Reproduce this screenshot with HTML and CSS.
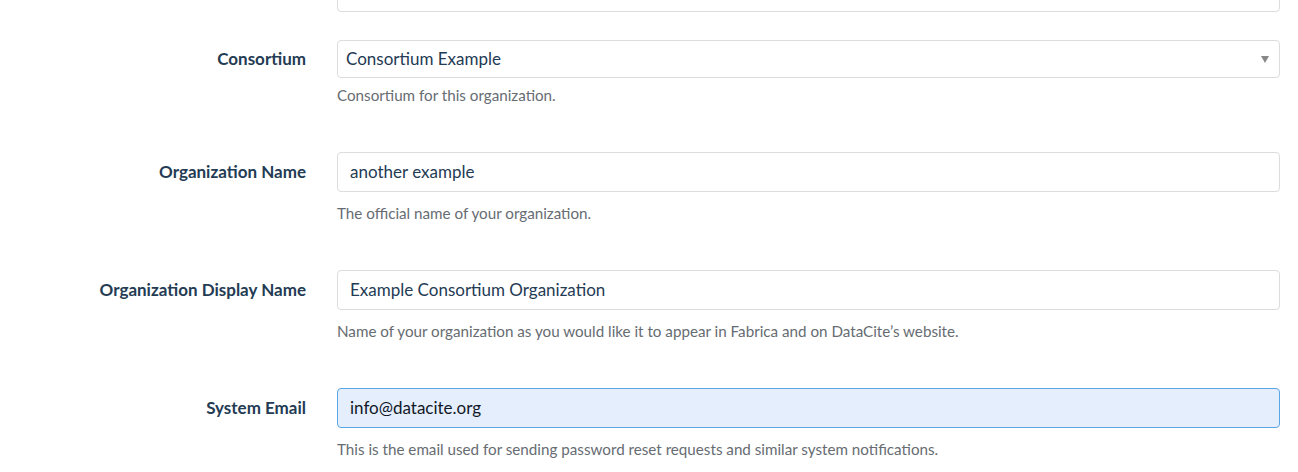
FILE: index.html
```html
<!DOCTYPE html>
<html lang="en">
<head>
<meta charset="utf-8">
<title>Organization settings</title>
<link rel="stylesheet" href="styles.css">
</head>
<body>
<form class="form">
  <div class="group group-first">
    <label class="label">Tax Status</label>
    <div class="field">
      <div class="input">&nbsp;</div>
    </div>
  </div>
  <div class="group group-select">
    <label class="label">Consortium</label>
    <div class="field">
      <div class="select">
        <span>Consortium Example</span>
        <span class="arrow"></span>
      </div>
      <p class="help">Consortium for this organization.</p>
    </div>
  </div>
  <div class="group">
    <label class="label">Organization Name</label>
    <div class="field">
      <div class="input">another example</div>
      <p class="help">The official name of your organization.</p>
    </div>
  </div>
  <div class="group">
    <label class="label">Organization Display Name</label>
    <div class="field">
      <div class="input">Example Consortium Organization</div>
      <p class="help">Name of your organization as you would like it to appear in Fabrica and on DataCite’s website.</p>
    </div>
  </div>
  <div class="group">
    <label class="label">System Email</label>
    <div class="field">
      <div class="input input-autofill">info@datacite.org</div>
      <p class="help">This is the email used for sending password reset requests and similar system notifications.</p>
    </div>
  </div>
</form>
</body>
</html>
```

FILE: styles.css
```css
html, body {
  margin: 0;
  padding: 0;
  background: #ffffff;
}
body {
  font-family: "Lato", "Liberation Sans", sans-serif;
  color: #243b54;
  overflow: hidden;
}
.form {
  margin-top: -28px;
  width: 1280px;
}
.group {
  display: grid;
  grid-template-columns: 306px 943px;
  column-gap: 31px;
  margin-bottom: 47px;
}
.group-first {
  margin-bottom: 28px;
}
.label {
  text-align: right;
  font-weight: 700;
  font-size: 17px;
  line-height: 20px;
  padding-top: 10px;
  color: #243b54;
}
.field {
  display: flex;
  flex-direction: column;
}
.input {
  box-sizing: border-box;
  height: 40px;
  border: 1px solid #dcdcdc;
  border-radius: 4px;
  padding: 0 12px;
  font-size: 17px;
  line-height: 38px;
  color: #243b54;
  background: #fff;
}
.input-autofill {
  background: #e5eefd;
  border-color: #5ba7e4;
  color: #111827;
}
.select {
  box-sizing: border-box;
  height: 38px;
  border: 1px solid #dcdcdc;
  border-radius: 4px;
  padding: 0 8px;
  font-size: 17px;
  line-height: 36px;
  color: #243b54;
  display: flex;
  justify-content: space-between;
  align-items: center;
}
.arrow {
  width: 0;
  height: 0;
  border-left: 4px solid transparent;
  border-right: 4px solid transparent;
  border-top: 7px solid #888;
  margin-right: 2px;
}
.help {
  margin: 11px 0 0;
  font-size: 15.2px;
  line-height: 20px;
  color: #666c72;
}
.group-select .label {
  padding-top: 9px;
}
.group-select .help {
  margin-top: 7px;
}
```
